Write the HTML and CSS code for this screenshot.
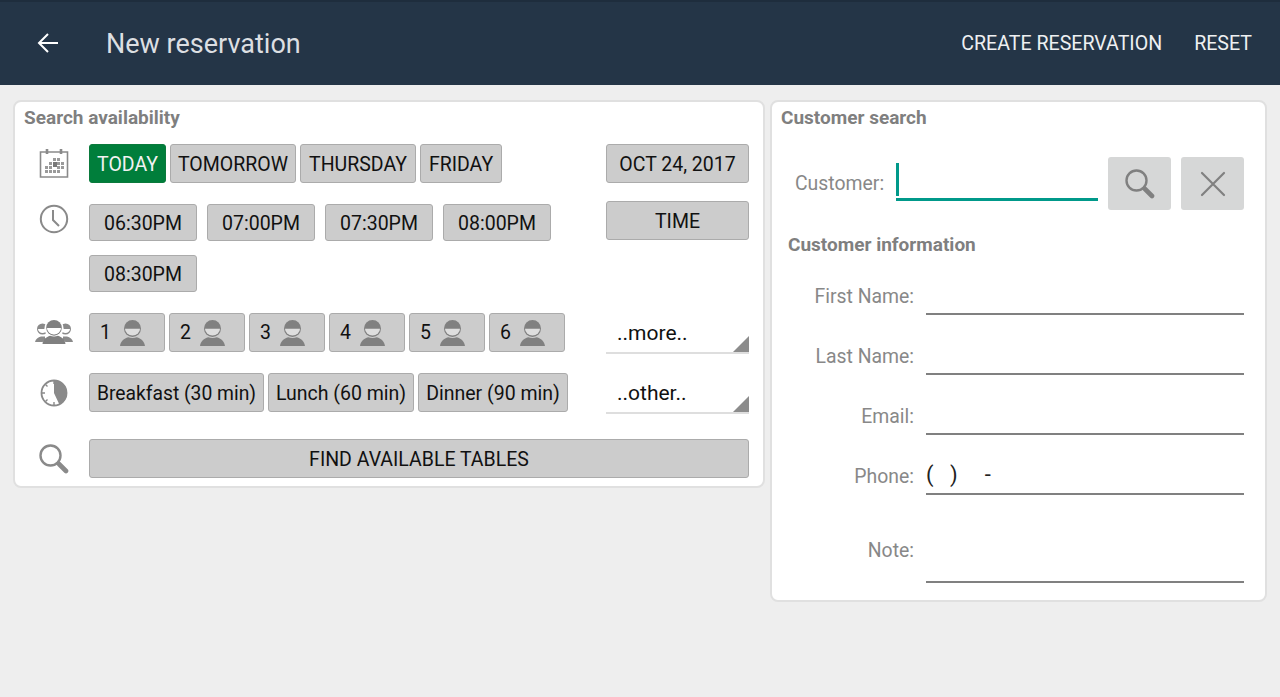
FILE: index.html
```html
<!DOCTYPE html>
<html lang="en">
<head>
<meta charset="utf-8">
<title>New reservation</title>
<link rel="stylesheet" href="styles.css">
</head>
<body>
<svg class="defs" width="0" height="0">
  <defs>
    <g id="person">
      <circle cx="12.500" cy="8.500" r="8.500" fill="#808080"/>
      <path d="M5 8.800h15a7.500 6.800 0 0 1-15 0z" fill="#dedede"/>
      <path d="M0 26c.6-5 4-7.400 8.200-8.800 2.600 1 6 1 8.600 0 4.200 1.400 7.600 3.800 8.200 8.800z" fill="#808080"/>
    </g>
    <g id="search">
      <circle cx="11.500" cy="11.500" r="10" fill="none" stroke-width="2.400"/>
      <path d="M20 20l7 7" fill="none" stroke-width="4.600" stroke-linecap="round"/>
      <path d="M18 18l3 3" fill="none" stroke-width="2.400"/>
    </g>
  </defs>
</svg>
<header class="topbar">
  <svg class="back" width="24" height="24" viewBox="0 0 24 24"><path d="M22 12H3M12 3l-9 9 9 9" fill="none" stroke="#fff" stroke-width="2"/></svg>
  <h1 class="title">New reservation</h1>
  <nav class="actions">
    <span>CREATE RESERVATION</span>
    <span>RESET</span>
  </nav>
</header>
<main class="content">
  <section class="card card-search">
    <h2 class="card-title">Search availability</h2>
    <div class="row row-date">
      <span class="icon-cell">
        <svg width="30" height="30" viewBox="0 0 30 30">
          <path d="M1.500 4h27v25h-27z" fill="none" stroke="#8a8a8a" stroke-width="1.600"/>
          <path d="M8 1v5M22 1v5" stroke="#8a8a8a" stroke-width="2.600"/>
          <path d="M14 10h3v3h-3zM18 10h3v3h-3zM10 14h3v3h-3zM18 14h3v3h-3zM22 14h3v3h-3zM6 18h3v3H6zM10 18h3v3h-3zM18 18h3v3h-3zM22 18h3v3h-3zM6 22h3v3H6zM10 22h3v3h-3zM14 22h3v3h-3zM18 22h3v3h-3z" fill="#9a9a9a"/>
          <path d="M14 14h4v5h-4z" fill="#777"/>
        </svg>
      </span>
      <div class="btn-group">
        <button class="btn btn-active btn-today">TODAY</button>
        <button class="btn btn-tomorrow">TOMORROW</button>
        <button class="btn btn-thursday">THURSDAY</button>
        <button class="btn btn-friday">FRIDAY</button>
      </div>
      <button class="btn btn-side">OCT 24, 2017</button>
    </div>
    <div class="row row-time">
      <span class="icon-cell icon-clock">
        <svg width="30" height="30" viewBox="0 0 30 30">
          <circle cx="15" cy="15" r="13.200" fill="none" stroke="#8a8a8a" stroke-width="2"/>
          <path d="M14 6v10l6 6" fill="none" stroke="#8a8a8a" stroke-width="2"/>
        </svg>
      </span>
      <div class="time-grid">
        <button class="btn btn-time">06:30PM</button>
        <button class="btn btn-time">07:00PM</button>
        <button class="btn btn-time">07:30PM</button>
        <button class="btn btn-time">08:00PM</button>
        <button class="btn btn-time">08:30PM</button>
      </div>
      <button class="btn btn-side">TIME</button>
    </div>
    <div class="row row-party">
      <span class="icon-cell">
        <svg width="38" height="28" viewBox="0 0 38 28">
          <g fill="#8a8a8a">
            <circle cx="7.500" cy="10" r="5.500"/><path d="M0 23c.5-3 3-4.500 6-5.500h4v5.500z"/>
            <circle cx="30.500" cy="10" r="5.500"/><path d="M38 23c-.5-3-3-4.500-6-5.500h-4v5.500z"/>
          </g>
          <path d="M3 10h9a4.500 4 0 0 1-9 0zM26 10h9a4.500 4 0 0 1-9 0z" fill="#fff"/>
          <circle cx="19" cy="9.500" r="9.600" fill="#fff"/>
          <path d="M5.500 28c.6-5 4-7.400 8-8.800h11c4 1.400 7.400 3.800 8 8.800z" fill="#fff"/>
          <g transform="translate(7.500 1) scale(.92)"><use href="#person"/></g>
          <path d="M12.100 9.100h13.800a6.900 6.300 0 0 1-13.800 0z" fill="#fff"/>
        </svg>
      </span>
      <div class="btn-group">
        <button class="btn btn-party">1<svg width="25" height="26" viewBox="0 0 25 26"><use href="#person"/></svg></button>
        <button class="btn btn-party">2<svg width="25" height="26" viewBox="0 0 25 26"><use href="#person"/></svg></button>
        <button class="btn btn-party">3<svg width="25" height="26" viewBox="0 0 25 26"><use href="#person"/></svg></button>
        <button class="btn btn-party">4<svg width="25" height="26" viewBox="0 0 25 26"><use href="#person"/></svg></button>
        <button class="btn btn-party">5<svg width="25" height="26" viewBox="0 0 25 26"><use href="#person"/></svg></button>
        <button class="btn btn-party">6<svg width="25" height="26" viewBox="0 0 25 26"><use href="#person"/></svg></button>
      </div>
      <div class="select">..more..</div>
    </div>
    <div class="row row-meal">
      <span class="icon-cell">
        <svg width="28" height="28" viewBox="0 0 28 28">
          <circle cx="14" cy="14" r="12.500" fill="none" stroke="#8a8a8a" stroke-width="1.800"/>
          <path d="M14 14V1a13 13 0 0 1 5.500 24.800z" fill="#8a8a8a"/>
          <path d="M14 2v3M14 23v3M2 14h3M5.500 5.500l2 2M5.500 22.500l2-2" stroke="#8a8a8a" stroke-width="1.400"/>
        </svg>
      </span>
      <div class="btn-group">
        <button class="btn btn-breakfast">Breakfast (30 min)</button>
        <button class="btn btn-lunch">Lunch (60 min)</button>
        <button class="btn btn-dinner">Dinner (90 min)</button>
      </div>
      <div class="select">..other..</div>
    </div>
    <div class="row row-find">
      <span class="icon-cell">
        <svg width="30" height="30" viewBox="0 0 30 30" stroke="#8a8a8a"><use href="#search"/></svg>
      </span>
      <button class="btn btn-find">FIND AVAILABLE TABLES</button>
    </div>
  </section>
  <section class="card card-customer">
    <h2 class="card-title">Customer search</h2>
    <div class="customer-search">
      <label class="customer-label" for="customer">Customer:</label>
      <span class="customer-field">
        <input class="customer-input" id="customer" type="text">
      </span>
      <button class="tool-btn" aria-label="Search">
        <svg width="30" height="30" viewBox="0 0 30 30" stroke="#808080"><use href="#search"/></svg>
      </button>
      <button class="tool-btn" aria-label="Clear">
        <svg width="26" height="26" viewBox="0 0 26 26"><path d="M2 2l22 22M24 2L2 24" stroke="#808080" stroke-width="2.200" stroke-linecap="round"/></svg>
      </button>
    </div>
    <h3 class="section-title">Customer information</h3>
    <div class="field"><label class="field-label">First Name:</label><input class="field-input" type="text"></div>
    <div class="field"><label class="field-label">Last Name:</label><input class="field-input" type="text"></div>
    <div class="field"><label class="field-label">Email:</label><input class="field-input" type="text"></div>
    <div class="field"><label class="field-label">Phone:</label><input class="field-input field-phone" type="text" value="(   )     -"></div>
    <div class="field field-note"><label class="field-label">Note:</label><input class="field-input" type="text"></div>
  </section>
</main>
</body>
</html>
```
FILE: styles.css
```css
* { box-sizing: border-box; }
html, body { margin: 0; height: 100%; }
body {
  background: #eeeeee;
  font-family: Roboto, "Liberation Sans", sans-serif;
  overflow: hidden;
}
.defs { display: block; height: 0; }

.topbar {
  height: 85px;
  background: #243547;
  border-top: 2px solid #1e2d3d;
  display: flex;
  align-items: center;
  padding: 0 28px 0 36px;
}
.back { flex: none; margin-bottom: 2px; }
.title {
  margin: 0 0 0 46px;
  font-size: 27px;
  font-weight: 400;
  color: #dcdfe2;
}
.actions {
  margin-left: auto;
  margin-bottom: 1px;
  display: flex;
  gap: 32px;
  color: #eef0f2;
  font-size: 19.600px;
}

.content {
  display: flex;
  align-items: flex-start;
  gap: 5px;
  padding: 15px 13px 0;
}
.card {
  background: #fff;
  border: 2px solid #e0e0e0;
  border-radius: 8px;
}
.card-search { width: 752px; padding-bottom: 8px; }
.card-customer { width: 497px; height: 502px; }
.card-title {
  margin: 0;
  height: 26px;
  line-height: 31px;
  padding-left: 9px;
  font-size: 19px;
  font-weight: 700;
  color: #7f7f7f;
}

.row {
  display: flex;
  align-items: flex-start;
  padding-right: 14px;
}
.row-date { margin-top: 16px; }
.row-time { margin-top: 18px; }
.row-party { margin-top: 21px; }
.row-meal { margin-top: 19px; }
.row-find { margin-top: 25px; }

.icon-cell {
  flex: none;
  width: 74px;
  height: 39px;
  display: flex;
  align-items: center;
  justify-content: center;
  padding-left: 4px;
}
.row-date .icon-cell { height: 37px; }
.icon-clock { height: 36px; }
.btn-group { display: flex; gap: 4px; }

.btn {
  height: 39px;
  padding: 2px 0 0;
  background: #cccccc;
  border: 1px solid #ababab;
  border-radius: 3px;
  color: #111;
  font-family: inherit;
  font-size: 19.500px;
  white-space: nowrap;
}
.btn-active { background: #007e3b; border-color: #0a7a3c; color: #f2f2f2; }
.btn-today { width: 77px; }
.btn-tomorrow { width: 126px; }
.btn-thursday { width: 116px; }
.btn-friday { width: 82px; }
.btn-side { flex: none; width: 143px; margin-left: auto; }

.time-grid {
  width: 480px;
  padding-top: 3px;
  display: flex;
  flex-wrap: wrap;
  column-gap: 10px;
  row-gap: 14px;
}
.btn-time { width: 108px; height: 37px; }

.btn-party {
  width: 76px;
  display: flex;
  align-items: center;
  padding: 0 0 0 10px;
  gap: 9px;
}
.btn-party svg { flex: none; }

.btn-breakfast { width: 175px; font-size: 19.300px; }
.btn-lunch { width: 146px; }
.btn-dinner { width: 150px; }

.select {
  position: relative;
  flex: none;
  width: 143px;
  height: 41px;
  margin-left: auto;
  padding-left: 11px;
  line-height: 40px;
  font-size: 21px;
  color: #111;
  border-bottom: 2px solid #dedede;
}
.select::after {
  content: "";
  position: absolute;
  right: 0;
  bottom: 0;
  border-style: solid;
  border-width: 0 0 16px 16px;
  border-color: transparent transparent #8c8c8c transparent;
}

.btn-find { flex: 1; }

.customer-search {
  display: flex;
  align-items: stretch;
  height: 53px;
  margin-top: 29px;
  padding-left: 23px;
}
.customer-label {
  flex: none;
  width: 89px;
  align-self: center;
  font-size: 19.400px;
  white-space: nowrap;
  color: #888;
}
.customer-field {
  position: relative;
  width: 202px;
  height: 38px;
  margin: 6px 0 0 12px;
  display: block;
}
.customer-field::before {
  content: "";
  position: absolute;
  left: 0;
  top: 0;
  width: 3px;
  height: 33px;
  background: #00998a;
}
.customer-input {
  display: block;
  width: 100%;
  height: 100%;
  padding: 0;
  border: 0;
  outline: 0;
  background: transparent;
  border-bottom: 3px solid #00998a;
}
.tool-btn {
  flex: none;
  width: 63px;
  margin-left: 10px;
  padding: 0;
  background: #d6d7d7;
  border: 0;
  border-radius: 3px;
  display: flex;
  align-items: center;
  justify-content: center;
}

.section-title {
  margin: 23px 0 0 16px;
  height: 22px;
  line-height: 24px;
  font-size: 19px;
  font-weight: 700;
  color: #7f7f7f;
}
.field {
  display: flex;
  align-items: flex-start;
  height: 60px;
  padding-right: 21px;
}
.field-label {
  flex: none;
  width: 142px;
  margin-top: 31px;
  text-align: right;
  font-size: 19.400px;
  line-height: 22px;
  color: #888;
}
.field-input {
  flex: none;
  width: 318px;
  height: 42px;
  margin: 18px 0 0 12px;
  padding: 0;
  border: 0;
  border-bottom: 2px solid #808080;
  outline: 0;
  background: transparent;
  font-family: inherit;
  font-size: 21px;
  color: #222;
}
.field-phone { font-size: 22px; padding-top: 3px; }
.field-note { height: 88px; }
.field-note .field-label { margin-top: 45px; }
.field-note .field-input { margin-top: 46px; }
```
